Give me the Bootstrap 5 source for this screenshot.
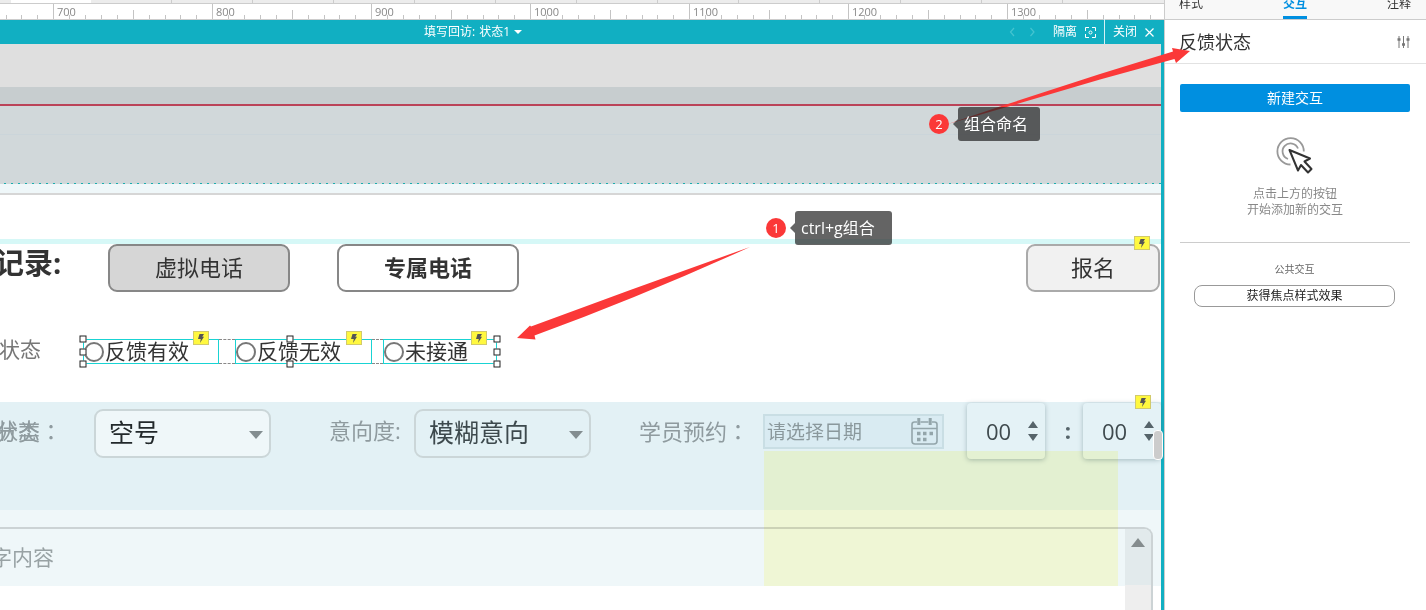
<!DOCTYPE html>
<html lang="zh-CN">
<head>
<meta charset="utf-8">
<meta name="viewport" content="width=device-width, initial-scale=1">
<title>填写回访</title>
<link href="https://cdn.jsdelivr.net/npm/bootstrap@5.3.0/dist/css/bootstrap.min.css" rel="stylesheet">
<style>
  :root { --teal: #11afc2; --ann: #fb3838; }
  body { font-family: "Open Sans", "Noto Sans CJK SC", sans-serif; font-size: 12px; line-height: 16px; color: #333; background: #fff; }
  button, input, select, textarea { font-family: inherit; }
  svg { display: block; flex: none; }
  .main-pane { min-width: 0; }
  .stage > *, .line-row > * { flex-shrink: 0; }

  /* ruler */
  .tabstrip { height: 4px; background: #ececec; border-bottom: 1px solid #ccc; }
  .strip-open { width: 80px; margin-left: 11px; height: 3px; background: #fff; }
  .strip-tab { width: 81px; border-right: 1px solid #ccc; height: 3px; }
  .ruler { height: 16px; border-bottom: 1px solid #ccc; }
  .ruler-seg { flex: none; width: 159px; color: #888; font-size: 11px; line-height: 15px; }
  .ruler-seg.first { width: 53px; overflow: hidden; }
  .ruler-seg span { position: absolute; left: 4px; top: 0; }

  /* state bar */
  .statebar { height: 24px; background: var(--teal); color: #fff; padding-left: 424px; padding-right: 2px; }
  .statebar button { color: #fff; font-size: 12px; line-height: 24px; }
  .split { border-left: 1px solid #d5f1f5; }

  .stage { border-right: 3px solid var(--teal); }
  .band-a { height: 43px; background: #dfdfdf; }
  .band-b { height: 19px; background: #c7cdcf; border-bottom: 2px solid #bb4358; }
  .band-c { height: 77px; background: linear-gradient(#cbd5da, #cbd5da) 0 28px / 100% 1px no-repeat #d1d8da; }
  .band-dots { height: 1px; background: repeating-linear-gradient(90deg, #d1d8da 0 4px, #19adae 4px 6px, #d1d8da 6px 7px); }
  .band-d { height: 11px; background: #eff7f9; border-bottom: 2px solid #d6d6d6; }
  .band-e { height: 49px; border-bottom: 5px solid #d6f8f7; }

  .line-row { display: flex; }
  .rec-title { width: 108px; margin: 0; font-size: 29px; line-height: 38px; font-weight: 700; text-indent: -5px; white-space: nowrap; }
  .proto-btn { width: 182px; height: 48px; font-size: 22px; line-height: 42px; padding: 0 0 2px; border: 2px solid #878787; border-radius: 9px; color: #333; background: #fff; }
  .proto-btn.filled { background: #d6d6d6; }
  .proto-btn.sign { width: 134px; background: #f1f1f1; border-color: #aaa; }
  .gap-title { margin-left: 47px; }
  .sign-wrap { margin-right: 1px; }
  .bolt { position: absolute; right: 10px; top: -8px; width: 16px; height: 14px; background: #fff83f; border: 1px solid #d2ca6c; display: flex; align-items: center; justify-content: center; z-index: 2; }
  .pick .bolt { right: 9px; top: -9px; }

  /* selected group */
  .fb-row { padding-top: 47px; height: 110px; }
  .fb-label { width: 83px; font-size: 21px; line-height: 20px; color: #777; text-indent: -1px; }
  .pick { height: 25px; border: 1px solid #19d3d3; width: 137px; font-size: 21px; line-height: 20px; white-space: nowrap; }
  .pick.first { width: 136px; }
  .pick.last { width: 114px; }
  .pick input { appearance: none; width: 20px; height: 20px; border: 2px solid #777; border-radius: 50%; margin: 0 1px 0 0; background: #fff; }
  .pick .cap { padding-bottom: 2px; }
  .joint { width: 16px; height: 25px; border: dashed #888; border-width: 1px 0; }
  .joint.narrow { width: 11px; }
  .grip { position: absolute; width: 7px; height: 7px; background: #fff; border: 1px solid #222; transform: translate(-50%, -50%); }

  /* form */
  .form-top { height: 108px; background: #e3f1f5; }
  .form-low { height: 76px; background: #eff7f9; padding-top: 17px; }
  .f-label { font-size: 22px; line-height: 28px; margin-top: 14px; color: #8f9b9f; white-space: nowrap; }
  .mid-colon { font-family: "Noto Sans CJK TC", sans-serif; }
  .w-kind { width: 94px; }
  .under, .over { margin-left: -4px; }
  .w-intent { margin-left: 58px; width: 85px; }
  .w-day { margin-left: 48px; width: 124px; }
  .proto-select { width: 177px; height: 49px; margin-top: 7px; border: 2px solid #cbd6d8; border-radius: 9px; appearance: none; font-size: 25px; line-height: 42px; padding: 0 0 3px 13px; color: #22292b;
    background: #eff7f9 url("data:image/svg+xml,%3Csvg xmlns='http://www.w3.org/2000/svg' width='14' height='8'%3E%3Cpath d='M0 0h14l-7 8z' fill='%23838d90'/%3E%3C/svg%3E") right 6px top 20px no-repeat; }
  .proto-select.clear { background-color: transparent; color: #3d494d; }
  .date-box { width: 181px; height: 35px; margin-top: 12px; border: 2px solid #c9dee4; background: #d9ebf2; padding: 0 4px 0 2px; }
  .date-box input { width: 140px; border: 0; padding: 0; background: none; font-size: 19px; line-height: 30px; }
  .date-box input::placeholder { color: #8a989c; opacity: 1; }
  .time-box { width: 78px; height: 56px; margin-top: 1px; background: #e4f2f6; border-radius: 4px; box-shadow: 0 1px 5px rgba(70, 100, 110, .4); }
  .time-box input { width: 60px; border: 0; background: none; padding: 0 0 0 19px; font-size: 22px; color: #3f4a4e; }
  .time-box.hour { margin-left: 23px; }
  .time-colon { width: 38px; font-size: 22px; font-weight: 700; line-height: 56px; color: #56646a; text-align: center; padding-left: 8px; }
  .notes-wrap { height: 83px; margin-right: 8px; }
  .notes { width: 100%; height: 83px; border: 2px solid #ccd3d5; border-width: 2px 2px 0 0; border-radius: 0 9px 0 0; resize: none; background: none; font-size: 21px; line-height: 28px; padding: 14px 0 0; text-indent: -9px; overflow: hidden; display: block; }
  .notes::placeholder { color: #98a2a4; opacity: 1; }
  .notes-bar { position: absolute; right: 2px; top: 2px; width: 26px; height: 81px; background: linear-gradient(#e2eaec 56px, #eee 56px); border-radius: 0 7px 0 0; padding: 9px 0 0 5px; }
  .shade { position: absolute; left: 764px; top: 49px; width: 354px; bottom: 0; background: #fffeda; mix-blend-mode: multiply; pointer-events: none; }
  .canvas-thumb { position: absolute; right: -2px; top: 28px; width: 10px; height: 30px; border: 1px solid #fff; border-radius: 4px; background: #ccc; z-index: 3; }

  /* annotations over the canvas */
  .arrows { position: absolute; left: 0; top: 0; z-index: 4; pointer-events: none; }
  .note { position: absolute; display: flex; align-items: center; gap: 9px; z-index: 5; height: 34px; }
  .note-a { left: 766px; top: 211px; }
  .note-b { left: 929px; top: 107px; }
  .note-num { width: 20px; height: 20px; border-radius: 50%; background: var(--ann); color: #fff; font-size: 13px; line-height: 20px; text-align: center; }
  .note-tip { position: relative; background: rgba(40, 40, 40, .72); color: #fff; font-size: 16px; line-height: 34px; padding: 0 12px 0 6px; border-radius: 3px; white-space: nowrap; }
  .note-a .note-tip { padding-right: 17px; }
  .note-tip::before { content: ""; position: absolute; left: -5px; top: 12px; border: 5px solid transparent; border-right-color: rgba(40, 40, 40, .72); border-left: 0; }

  /* inspector */
  .inspector { width: 262px; border-left: 1px solid #ccc; flex: none; }
  .insp-tabs { height: 20px; background: #f8f8f8; border-bottom: 1px solid #ccc; padding: 0 15px 0 14px; }
  .insp-tabs button { font-size: 12px; line-height: 16px; height: 23px; margin-top: -4px; padding-bottom: 7px !important; color: #333; }
  .insp-tabs .on { color: #008fe0; font-weight: 700; padding-bottom: 4px !important; border-bottom: 3px solid #008fe0 !important; }
  .insp-head { height: 44px; border-bottom: 1px solid #e2e2e2; padding: 0 16px 0 14px; }
  .insp-head h1 { font-size: 18px; line-height: 24px; font-weight: 400; margin: 0; }
  .insp-body { padding: 20px 16px 0 15px; }
  .new-btn { height: 28px; font-size: 14px; line-height: 28px; border-radius: 2px; background: #008fe0; color: #fff; padding: 0; border: 0; }
  .click-icon { margin-top: 25px; }
  .hint { color: #888; margin: 12px 0 0; }
  .sep { border-top: 1px solid #ccc; margin-top: 24px; padding: 18px 15px 0 14px; }
  .sub { font-size: 10px; color: #666; }
  .pill-btn { height: 22px; margin-top: 8px; padding: 0; font-size: 12px; line-height: 20px; border: 1px solid #999; border-radius: 8px; color: #222; background: #fff; }
</style>
</head>
<body class="d-flex vh-100 overflow-hidden position-relative">

<svg width="0" height="0" class="position-absolute" aria-hidden="true">
  <symbol id="ticks" viewBox="0 0 159 15"><path d="M.5 0v15M80.500 6v9M16.500 11v4M32.500 11v4M48.500 11v4M64.500 11v4M96.500 11v4M112.500 11v4M127.500 11v4M143.500 11v4" stroke="#c4c4c4" fill="none"/></symbol>
  <symbol id="bolt" viewBox="0 0 8 9"><path d="M2.500 0H7L5.300 2.800H7L3 9l.8-4H1z" fill="#555"/></symbol>
</svg>

<main class="main-pane flex-grow-1 d-flex flex-column overflow-hidden">
  <div class="tabstrip d-flex overflow-hidden">
    <div class="strip-open flex-shrink-0"></div>
    <div class="strip-tab flex-shrink-0"></div><div class="strip-tab flex-shrink-0"></div><div class="strip-tab flex-shrink-0"></div><div class="strip-tab flex-shrink-0"></div><div class="strip-tab flex-shrink-0"></div><div class="strip-tab flex-shrink-0"></div><div class="strip-tab flex-shrink-0"></div><div class="strip-tab flex-shrink-0"></div><div class="strip-tab flex-shrink-0"></div><div class="strip-tab flex-shrink-0"></div><div class="strip-tab flex-shrink-0"></div><div class="strip-tab flex-shrink-0"></div>
  </div>
  <div class="ruler d-flex overflow-hidden flex-shrink-0">
    <div class="ruler-seg first d-flex justify-content-end"><svg width="159" height="15"><use href="#ticks"/></svg></div>
    <div class="ruler-seg position-relative"><svg width="159" height="15"><use href="#ticks"/></svg><span>700</span></div>
    <div class="ruler-seg position-relative"><svg width="159" height="15"><use href="#ticks"/></svg><span>800</span></div>
    <div class="ruler-seg position-relative"><svg width="159" height="15"><use href="#ticks"/></svg><span>900</span></div>
    <div class="ruler-seg position-relative"><svg width="159" height="15"><use href="#ticks"/></svg><span>1000</span></div>
    <div class="ruler-seg position-relative"><svg width="159" height="15"><use href="#ticks"/></svg><span>1100</span></div>
    <div class="ruler-seg position-relative"><svg width="159" height="15"><use href="#ticks"/></svg><span>1200</span></div>
    <div class="ruler-seg position-relative"><svg width="159" height="15"><use href="#ticks"/></svg><span>1300</span></div>
  </div>

  <div class="statebar d-flex align-items-center flex-shrink-0">
    <button type="button" class="border-0 bg-transparent p-0 d-flex align-items-center gap-1"><span>填写回访:</span><span>状态1</span><svg width="8" height="4" viewBox="0 0 8 4"><path d="M0 0h8L4 4z" fill="#fff"/></svg></button>
    <svg class="ms-auto me-3" width="28" height="10" viewBox="0 0 28 10" fill="none" stroke="#45c4d0" stroke-width="1.200"><path d="M5 1 1.500 5 5 9M21.500 1l3.500 4-3.500 4"/></svg>
    <button type="button" class="border-0 bg-transparent p-0 pe-2 d-flex align-items-center gap-2">隔离
      <svg width="11" height="11" viewBox="0 0 11 11" fill="none" stroke="#fff"><path d="M.5 4V.5H4M7 .5h3.500V4M10.500 7v3.500H7M4 10.500H.5V7"/><circle cx="5.500" cy="5.500" r="1.500"/></svg></button>
    <button type="button" class="split border-top-0 border-end-0 border-bottom-0 bg-transparent ps-2 pe-2 d-flex align-items-center gap-2">关闭
      <svg width="9" height="9" viewBox="0 0 9 9" stroke="#fff" stroke-width="1.200"><path d="M.5.5l8 8M8.500.5l-8 8"/></svg></button>
  </div>

  <div class="stage flex-grow-1 d-flex flex-column">
    <div class="band-a"></div>
    <div class="band-b"></div>
    <div class="band-c"></div>
    <div class="band-dots"></div>
    <div class="band-d"></div>
    <div class="band-e"></div>

    <div class="line-row">
      <h2 class="rec-title">记录:</h2>
      <button type="button" class="proto-btn filled">虚拟电话</button>
      <button type="button" class="proto-btn fw-bold gap-title">专属电话</button>
      <div class="sign-wrap ms-auto position-relative">
        <button type="button" class="proto-btn sign">报名</button>
        <span class="bolt"><svg width="8" height="9"><use href="#bolt"/></svg></span>
      </div>
    </div>

    <div class="line-row fb-row">
      <div class="fb-label">状态</div>
      <div class="d-flex position-relative align-self-start">
        <label class="pick first d-flex align-items-center position-relative"><input type="radio" name="fb"><span class="cap">反馈有效</span><span class="bolt"><svg width="8" height="9"><use href="#bolt"/></svg></span></label>
        <div class="joint"></div>
        <label class="pick d-flex align-items-center position-relative"><input type="radio" name="fb"><span class="cap">反馈无效</span><span class="bolt"><svg width="8" height="9"><use href="#bolt"/></svg></span></label>
        <div class="joint narrow"></div>
        <label class="pick last d-flex align-items-center position-relative"><input type="radio" name="fb"><span class="cap">未接通</span><span class="bolt"><svg width="8" height="9"><use href="#bolt"/></svg></span></label>
        <span class="grip start-0 top-0"></span><span class="grip start-0 top-50"></span><span class="grip start-0 top-100"></span>
        <span class="grip start-50 top-0"></span><span class="grip start-50 top-100"></span>
        <span class="grip start-100 top-0"></span><span class="grip start-100 top-50"></span><span class="grip start-100 top-100"></span>
      </div>
    </div>

    <div class="position-relative">
      <div class="form-top line-row">
        <label class="f-label w-kind position-relative" for="kind"><span class="under position-absolute start-0 top-0">状态</span><span class="over">分类<span class="mid-colon" lang="zh-TW">：</span></span></label>
        <select id="kind" class="proto-select"><option>空号</option></select>
        <label class="f-label w-intent" for="intent">意向度:</label>
        <select id="intent" class="proto-select clear"><option>模糊意向</option></select>
        <label class="f-label w-day" for="day">学员预约<span class="mid-colon" lang="zh-TW">：</span></label>
        <div class="date-box d-flex align-items-center justify-content-between">
          <input id="day" type="text" placeholder="请选择日期">
          <svg width="27" height="27" viewBox="0 0 27 27" fill="none" stroke="#93a5aa" stroke-width="1.600"><path d="M6 4H3.500Q1 4 1 6.500V23q0 3 3 3h19q3 0 3-3V6.500Q26 4 23.500 4H21M9.500 4h8M1 10.500h25"/><path d="M7.800 0v7M19.200 0v7" stroke-width="3"/><path d="M6 15.500h3.500M12 15.500h3.500M18.500 15.500H22M6 21.500h3.500M12 21.500h3.500" stroke-width="3.500"/></svg>
        </div>
        <div class="time-box hour d-flex align-items-center position-relative">
          <input type="text" value="00" aria-label="时">
          <svg width="12" height="20" viewBox="0 0 12 20" fill="#56646a"><path d="M1 7 6 0l5 7zM1 13h10l-5 7z"/></svg>
        </div>
        <div class="time-colon">:</div>
        <div class="time-box d-flex align-items-center position-relative">
          <input type="text" value="00" aria-label="分">
          <svg width="12" height="20" viewBox="0 0 12 20" fill="#56646a"><path d="M1 7 6 0l5 7zM1 13h10l-5 7z"/></svg>
          <span class="bolt"><svg width="8" height="9"><use href="#bolt"/></svg></span>
        </div>
      </div>
      <div class="form-low">
        <div class="notes-wrap position-relative">
          <textarea class="notes" aria-label="内容" placeholder="字内容"></textarea>
          <div class="notes-bar"><svg width="16" height="9" viewBox="0 0 16 9"><path d="M8 0l7 9H1z" fill="#858c8e"/></svg></div>
        </div>
      </div>
      <div class="shade"></div>
      <div class="canvas-thumb"></div>
    </div>
  </div>
</main>

<aside class="inspector bg-white">
  <nav class="insp-tabs d-flex justify-content-between overflow-hidden">
    <button type="button" class="border-0 bg-transparent p-0">样式</button>
    <button type="button" class="on border-0 bg-transparent p-0">交互</button>
    <button type="button" class="border-0 bg-transparent p-0">注释</button>
  </nav>
  <div class="insp-head d-flex align-items-center justify-content-between">
    <h1>反馈状态</h1>
    <svg width="13" height="12" viewBox="0 0 13 12" stroke="#777" fill="#777"><path d="M2 0v12M6.500 0v12M11 0v12"/><path d="M.5 3.500h3M5 8.500h3M9.500 3.500h3" stroke-width="2.500"/></svg>
  </div>
  <div class="insp-body text-center">
    <button type="button" class="new-btn w-100 d-block">新建交互</button>
    <svg class="click-icon mx-auto" width="38" height="37" viewBox="0 0 38 37" fill="none"><path d="M14.500 27.500A13.200 13.200 0 1 1 27.800 14.500" stroke="#999" stroke-width="1.800"/><path d="M12 22A8 8 0 1 1 22 11.500" stroke="#999" stroke-width="1.800"/><path d="M13.500 13l20.500 8.500-5.500 3 7 7.500-3.500 3.500-7-7.500-3 5.500z" stroke="#333" stroke-width="2" stroke-linejoin="round" fill="#fff"/></svg>
    <p class="hint">点击上方的按钮<br>开始添加新的交互</p>
    <div class="sep">
      <div class="sub">公共交互</div>
      <button type="button" class="pill-btn w-100 d-block">获得焦点样式效果</button>
    </div>
  </div>
</aside>

<svg class="arrows" width="1426" height="610" viewBox="0 0 1426 610" fill="#fb3838" aria-hidden="true">
  <path d="M750 247Q640 286 531 326.500L530 325.500 517 338l18.500 1.500-1-4Q640 297 750 247z"/>
  <path d="M948 124 1000 106.500 1100 74 1173 51.500 1172 48 1190 51 1176 63 1174.500 59 1100 79.500 1000 109z"/>
</svg>
<div class="note note-a"><span class="note-num">1</span><span class="note-tip">ctrl+g组合</span></div>
<div class="note note-b"><span class="note-num">2</span><span class="note-tip">组合命名</span></div>
</body>
</html>
